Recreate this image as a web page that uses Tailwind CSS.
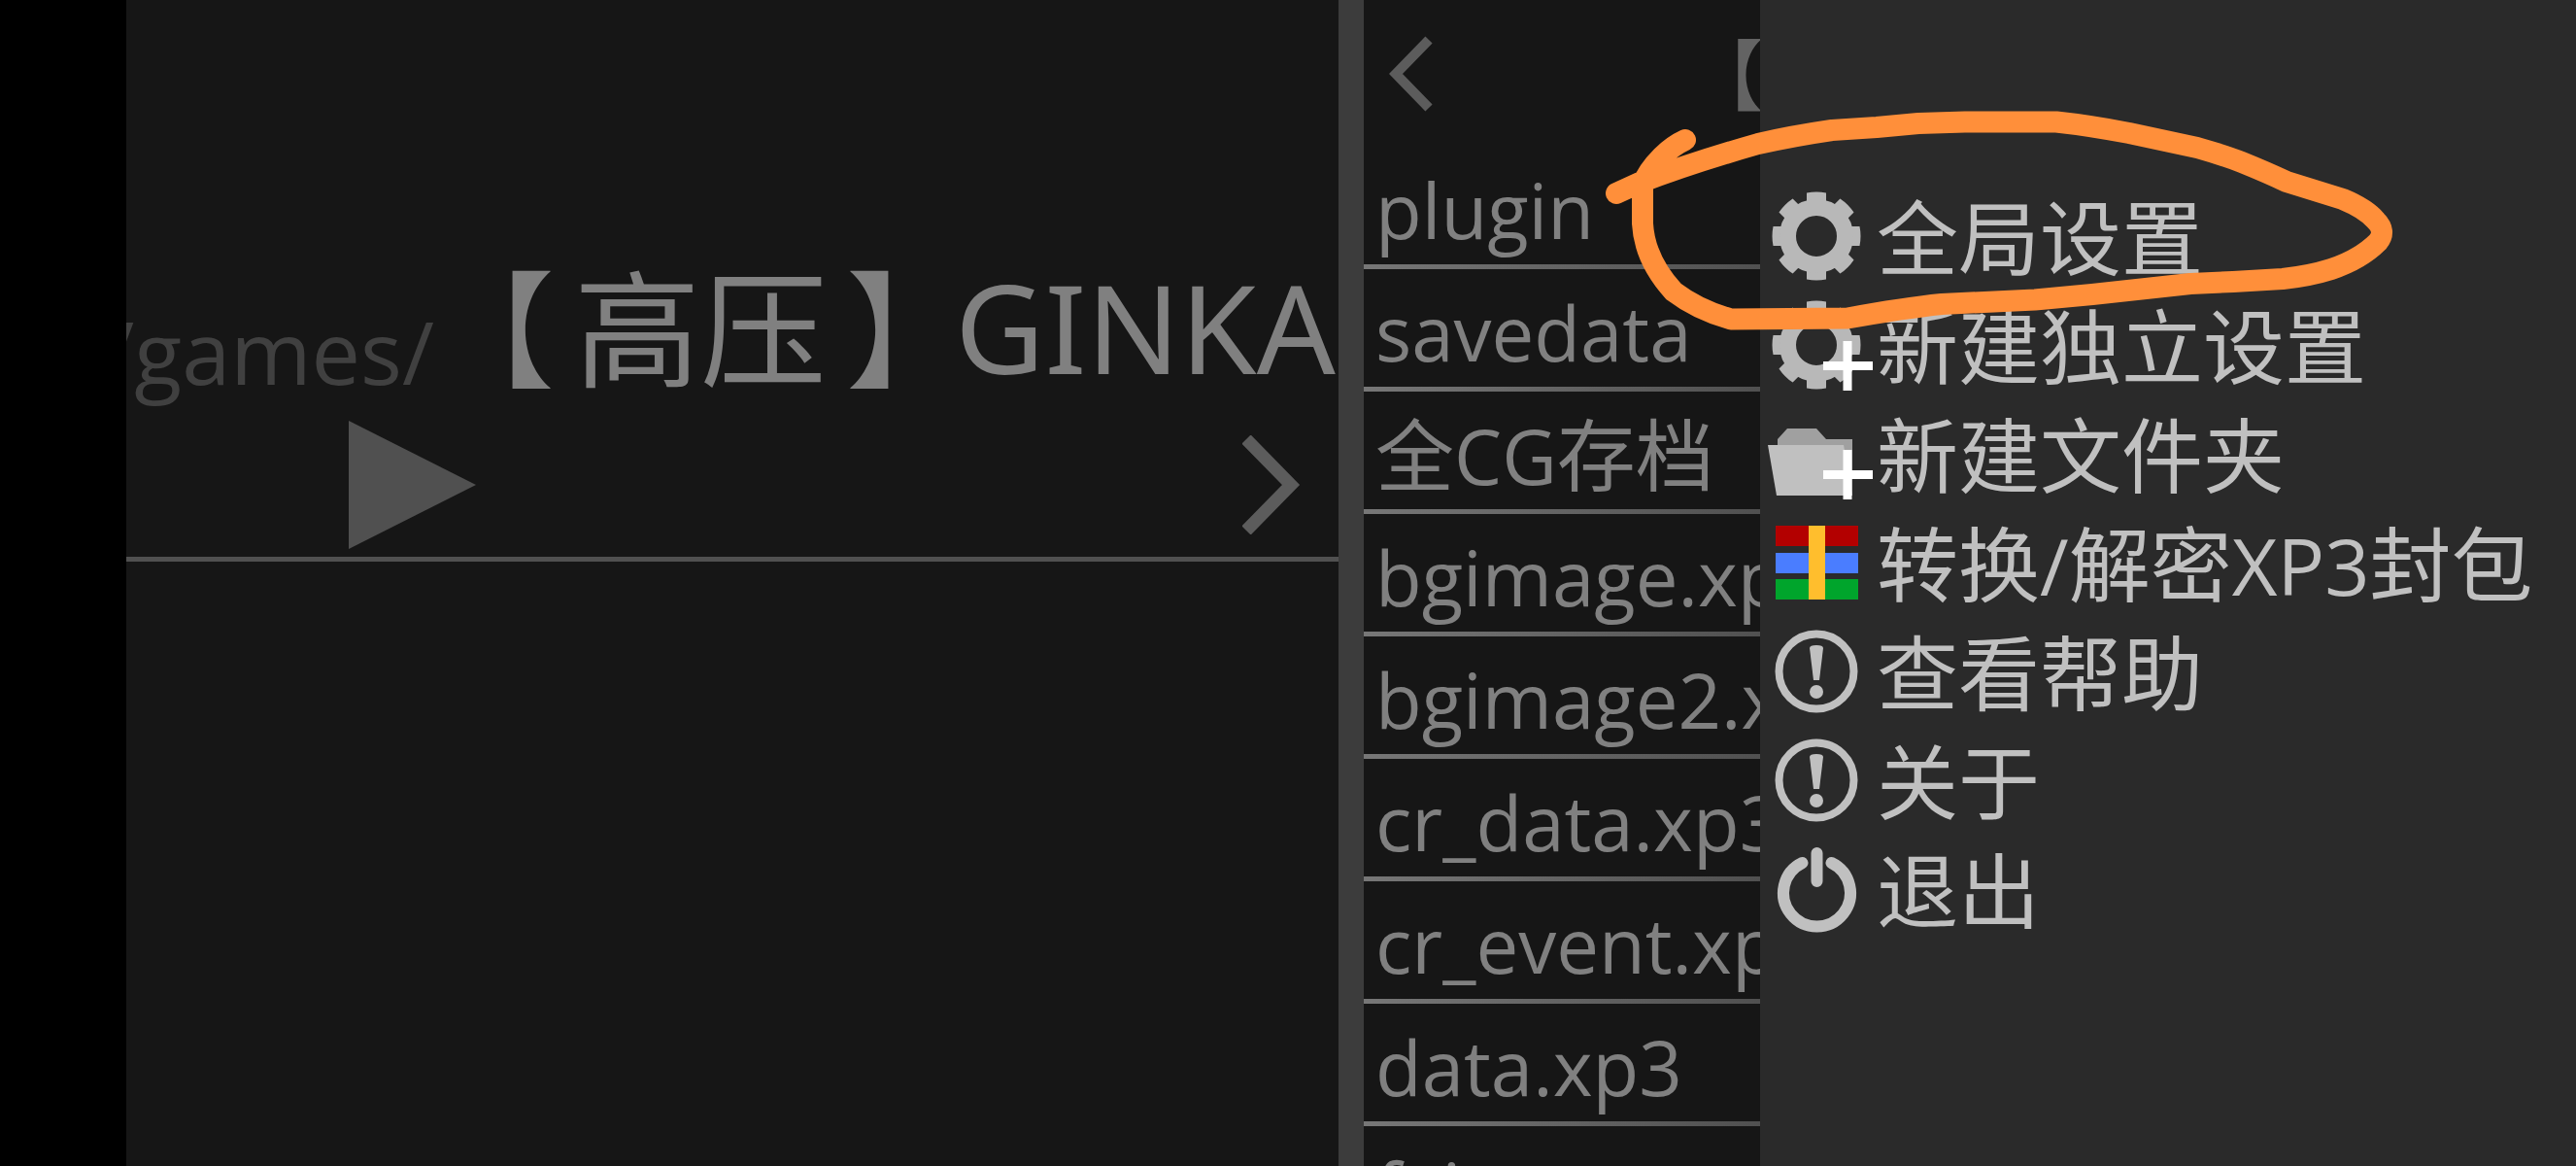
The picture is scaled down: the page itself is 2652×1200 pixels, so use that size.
<!DOCTYPE html>
<html lang="zh-CN">
<head>
<meta charset="utf-8">
<title>Kirikiroid</title>
<script src="https://cdn.jsdelivr.net/npm/@tailwindcss/browser@4"></script>
</head>
<body class="relative flex h-screen overflow-hidden bg-black pl-[130px] font-['Open_Sans','Noto_Sans_CJK_SC',sans-serif] whitespace-nowrap text-[#808080]">

<svg class="hidden">
  <defs>
    <g id="gear" fill="#b8b8b8">
      <path d="M40 11.500Q50 9.500 60 11.500V32H40ZM40 100.500Q50 102.500 60 100.500V80H40Z"/>
      <path d="M40 11.500Q50 9.500 60 11.500V32H40ZM40 100.500Q50 102.500 60 100.500V80H40Z" transform="rotate(90 50 56)"/>
      <path d="M40 11.500Q50 9.500 60 11.500V32H40ZM40 100.500Q50 102.500 60 100.500V80H40Z" transform="rotate(45 50 56)"/>
      <path d="M40 11.500Q50 9.500 60 11.500V32H40ZM40 100.500Q50 102.500 60 100.500V80H40Z" transform="rotate(135 50 56)"/>
      <circle cx="50" cy="56" r="29.500" fill="none" stroke="#b8b8b8" stroke-width="17"/>
    </g>
    <path id="plus" d="M57 77.500H108M82 52V103" stroke="#fff" stroke-width="9" fill="none"/>
    <g id="notice">
      <circle cx="50" cy="56" r="38.500" fill="none" stroke="#c0c0c0" stroke-width="8"/>
      <path d="M43 32Q43 29 50 29T57 32L53 65H47Z" fill="#c0c0c0"/>
      <circle cx="50" cy="77" r="7" fill="#c0c0c0"/>
    </g>
  </defs>
</svg>

<main class="min-w-0 flex-1 overflow-hidden bg-[#161616]">
  <section class="flex h-[578px] flex-col justify-end border-b-[5px] border-[#505050]">
    <h1 class="flex items-end overflow-hidden">
      <span class="flex w-[319px] shrink-0 justify-end overflow-hidden pr-[2px] text-[90px] leading-[128px] text-[#404040]">/games/</span>
      <span class="-ml-2 flex gap-5 font-['Noto_Sans_CJK_SC',sans-serif] text-[130px] leading-[188px]"><span>【</span><span>高压</span><span>】</span></span>
      <span class="-ml-[18px] font-['Noto_Sans',sans-serif] text-[127px] leading-[178px]">GINKA</span>
    </h1>
    <div class="flex h-[148px] shrink-0 items-center justify-between pr-[39px] pl-[229px]">
      <button aria-label="播放"><svg class="h-[132px] w-[132px]" viewBox="0 0 132 132"><path d="M0 0L131 66L0 132Z" fill="#505050"/></svg></button>
      <button aria-label="下一级"><svg class="h-[102px] w-[60px]" viewBox="0 0 60 102"><path d="M4 4L50 51L4 98" fill="none" stroke="#5c5c5c" stroke-width="13"/></svg></button>
    </div>
  </section>
</main>

<div class="w-[26px] shrink-0 bg-[#3c3c3c]"></div>

<nav class="w-[408px] shrink-0 overflow-hidden bg-[#161616] text-[78px]">
  <header class="flex h-[151px] items-center pl-[25px] text-[#636363]">
    <button aria-label="返回"><svg class="h-[78px] w-[47px]" viewBox="0 0 47 78"><path d="M42 4L8 39L42 74" fill="none" stroke="#5c5c5c" stroke-width="10"/></svg></button>
    <span class="ml-auto w-[76px] overflow-hidden pb-2 font-['Noto_Sans_CJK_SC',sans-serif] text-[80px] leading-[100px]">【</span>
  </header>
  <ul>
    <li><a href="#" class="block h-[126px] border-b-[5px] border-[#606060] pl-3 leading-[130px] [border-image:linear-gradient(90deg,#777,#505050)_1]">plugin</a></li>
    <li><a href="#" class="block h-[126px] border-b-[5px] border-[#606060] pl-3 leading-[130px] [border-image:linear-gradient(90deg,#777,#505050)_1]">savedata</a></li>
    <li><a href="#" class="block h-[126px] border-b-[5px] border-[#606060] pl-3 leading-[130px] [border-image:linear-gradient(90deg,#777,#505050)_1]"><span class="text-[81px]">全</span>CG<span class="text-[81px]">存档</span></a></li>
    <li><a href="#" class="block h-[126px] border-b-[5px] border-[#606060] pl-3 leading-[130px] [border-image:linear-gradient(90deg,#777,#505050)_1]">bgimage.xp3</a></li>
    <li><a href="#" class="block h-[126px] border-b-[5px] border-[#606060] pl-3 leading-[130px] [border-image:linear-gradient(90deg,#777,#505050)_1]">bgimage2.xp3</a></li>
    <li><a href="#" class="block h-[126px] border-b-[5px] border-[#606060] pl-3 leading-[130px] [border-image:linear-gradient(90deg,#777,#505050)_1]">cr_data.xp3</a></li>
    <li><a href="#" class="block h-[126px] border-b-[5px] border-[#606060] pl-3 leading-[130px] [border-image:linear-gradient(90deg,#777,#505050)_1]">cr_event.xp3</a></li>
    <li><a href="#" class="block h-[126px] border-b-[5px] border-[#606060] pl-3 leading-[130px] [border-image:linear-gradient(90deg,#777,#505050)_1]">data.xp3</a></li>
    <li><a href="#" class="block h-[126px] border-b-[5px] border-[#606060] pl-3 leading-[130px] [border-image:linear-gradient(90deg,#777,#505050)_1]">fgimage.xp3</a></li>
  </ul>
</nav>

<aside class="flex w-[840px] shrink-0 flex-col overflow-hidden bg-[#2a2a2a] pt-[187px] pl-2 font-['Noto_Sans_CJK_SC',sans-serif] text-[84px] leading-[108px] text-[#c0c0c0]">
  <button class="flex h-[112px] items-start">
    <svg class="h-[112px] w-[112px]" viewBox="0 0 112 112"><use href="#gear"/></svg>全局设置
  </button>
  <button class="flex h-[112px] items-start">
    <svg class="h-[112px] w-[112px]" viewBox="0 0 112 112"><use href="#gear"/><use href="#plus"/></svg>新建独立设置
  </button>
  <button class="flex h-[112px] items-start">
    <svg class="h-[112px] w-[112px]" viewBox="0 0 112 112"><path d="M10 99V41L20 30H50L60 41H87V99Z" fill="#a0a0a0"/><path d="M0 47H78L87 99H9Z" fill="#c0c0c0"/><use href="#plus"/></svg>新建文件夹
  </button>
  <button class="flex h-[112px] items-start">
    <svg class="h-[112px] w-[112px]" viewBox="0 0 112 112"><path d="M8 18H93V39H8Z" fill="#b30000"/><path d="M8 46H93V67H8Z" fill="#4a7dff"/><path d="M8 73H93V94H8Z" fill="#00a52c"/><path d="M42 18H59V94H42Z" fill="#ffbe2d"/></svg><span>转换<span class="font-['Open_Sans',sans-serif] text-[81px]">/</span>解密<span class="font-['Open_Sans',sans-serif] text-[81px]">XP3</span>封包</span>
  </button>
  <button class="flex h-[112px] items-start">
    <svg class="h-[112px] w-[112px]" viewBox="0 0 112 112"><use href="#notice"/></svg>查看帮助
  </button>
  <button class="flex h-[112px] items-start">
    <svg class="h-[112px] w-[112px]" viewBox="0 0 112 112"><use href="#notice"/></svg>关于
  </button>
  <button class="flex h-[112px] items-start">
    <svg class="h-[112px] w-[112px]" viewBox="0 0 112 112"><path d="M35.500 29A34.500 34.500 0 1 0 65.500 29M50.500 19V48" fill="none" stroke="#c0c0c0" stroke-width="12" stroke-linecap="round"/></svg>退出
  </button>
</aside>

<!-- Hand-drawn marker around the global settings entry -->
<svg class="pointer-events-none absolute top-[110px] right-[180px] h-[240px] w-[832px]" viewBox="1640 110 832 240" fill="none" stroke="#ff8f3a" stroke-width="22" stroke-linecap="round" stroke-linejoin="round">
  <path d="M1664 199L1688 188Q1740 168 1810 148Q1845 140 1886 134L1932 131L1975 127L2023 125.500H2117Q2150 129 2192 137L2262 152Q2290 160 2308 167Q2335 178 2354 187L2412 205Q2436 215 2446 227Q2457 238 2448 249Q2430 267 2400 277Q2378 284 2350 287L2299 290L2255 292L2154 303L2095 308.500L1999 313Q1960 317 1902 327.500L1782 328.500Q1748 319 1723 300Q1693 267 1691 230V190Q1696 176 1711 161Q1722 150 1735 144"/>
</svg>
</body>
</html>
